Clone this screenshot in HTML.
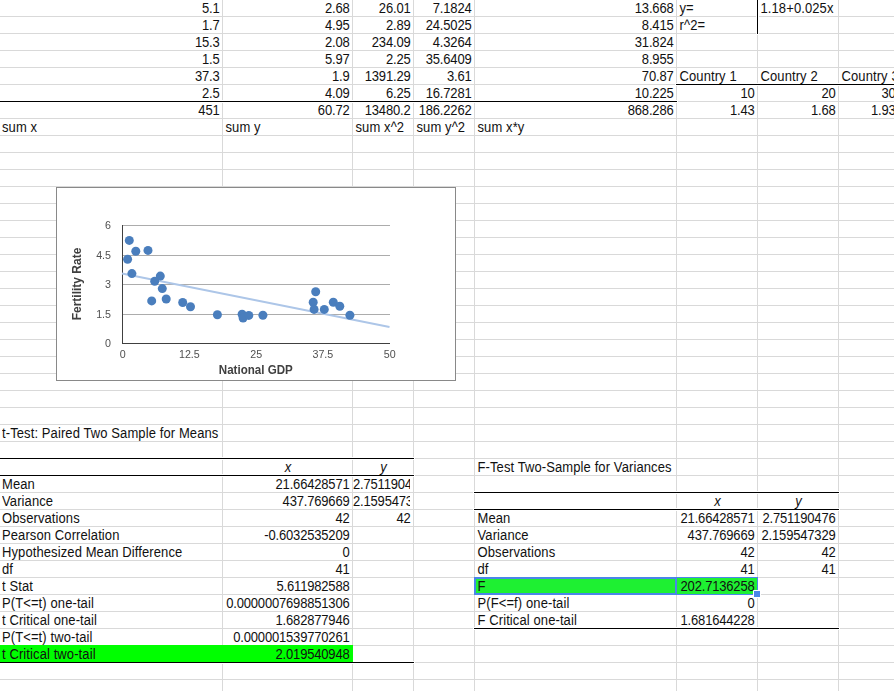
<!DOCTYPE html>
<html><head><meta charset="utf-8"><style>
html,body{margin:0;padding:0;background:#fff;}
body{width:894px;height:691px;overflow:hidden;position:relative;font-family:"Liberation Sans",sans-serif;}
.h{position:absolute;left:0;width:894px;height:1px;background:#d9d9d9;}
.v{position:absolute;top:0;width:1px;height:691px;background:#d9d9d9;}
.f{position:absolute;}
.t{position:absolute;height:17px;line-height:17px;font-size:13px;color:#111;white-space:nowrap;transform:scaleY(1.08);transform-origin:50% 12px;}
.r{text-align:right;}
.t{letter-spacing:0.1px;}
.n{letter-spacing:-0.18px;}
.c{text-align:center;}
.i{font-style:italic;}
.ch{position:absolute;left:0;top:0;will-change:transform;}
.ax{font-size:10.7px;fill:#505050;font-family:"Liberation Sans",sans-serif;}
.tt{font-size:12px;font-weight:bold;fill:#404040;font-family:"Liberation Sans",sans-serif;}
</style></head><body>
<div class="h" style="top:16px"></div>
<div class="h" style="top:33px"></div>
<div class="h" style="top:50px"></div>
<div class="h" style="top:67px"></div>
<div class="h" style="top:84px"></div>
<div class="h" style="top:101px"></div>
<div class="h" style="top:118px"></div>
<div class="h" style="top:135px"></div>
<div class="h" style="top:152px"></div>
<div class="h" style="top:169px"></div>
<div class="h" style="top:186px"></div>
<div class="h" style="top:203px"></div>
<div class="h" style="top:220px"></div>
<div class="h" style="top:237px"></div>
<div class="h" style="top:254px"></div>
<div class="h" style="top:271px"></div>
<div class="h" style="top:288px"></div>
<div class="h" style="top:305px"></div>
<div class="h" style="top:322px"></div>
<div class="h" style="top:339px"></div>
<div class="h" style="top:356px"></div>
<div class="h" style="top:373px"></div>
<div class="h" style="top:390px"></div>
<div class="h" style="top:407px"></div>
<div class="h" style="top:424px"></div>
<div class="h" style="top:441px"></div>
<div class="h" style="top:458px"></div>
<div class="h" style="top:475px"></div>
<div class="h" style="top:492px"></div>
<div class="h" style="top:509px"></div>
<div class="h" style="top:526px"></div>
<div class="h" style="top:543px"></div>
<div class="h" style="top:560px"></div>
<div class="h" style="top:577px"></div>
<div class="h" style="top:594px"></div>
<div class="h" style="top:611px"></div>
<div class="h" style="top:628px"></div>
<div class="h" style="top:645px"></div>
<div class="h" style="top:662px"></div>
<div class="h" style="top:679px"></div>
<div class="v" style="left:222px"></div>
<div class="v" style="left:352px"></div>
<div class="v" style="left:413px"></div>
<div class="v" style="left:474px"></div>
<div class="v" style="left:676px"></div>
<div class="v" style="left:757px"></div>
<div class="v" style="left:838px"></div>
<div class="f" style="left:0px;top:645px;width:353px;height:17px;background:#00ff00"></div>
<div class="f" style="left:474px;top:577px;width:284px;height:18px;background:#4a86e8"></div>
<div class="f" style="left:476px;top:579px;width:199px;height:14px;background:#1ef032"></div>
<div class="f" style="left:677px;top:578px;width:80px;height:16px;background:#1ef032"></div>
<div class="f" style="left:0px;top:101px;width:677px;height:1px;background:#000"></div>
<div class="f" style="left:676px;top:84px;width:219px;height:1px;background:#000"></div>
<div class="f" style="left:757px;top:0px;width:1px;height:34px;background:#000"></div>
<div class="f" style="left:0px;top:458px;width:414px;height:1px;background:#000"></div>
<div class="f" style="left:0px;top:475px;width:414px;height:1px;background:#000"></div>
<div class="f" style="left:0px;top:662px;width:414px;height:1px;background:#000"></div>
<div class="f" style="left:474px;top:492px;width:365px;height:1px;background:#000"></div>
<div class="f" style="left:474px;top:509px;width:365px;height:1px;background:#000"></div>
<div class="f" style="left:474px;top:628px;width:365px;height:1px;background:#000"></div>
<div class="f" style="left:222px;top:100px;width:1px;height:1px;background:#fff"></div>
<div class="f" style="left:222px;top:102px;width:1px;height:1px;background:#fff"></div>
<div class="f" style="left:222px;top:457px;width:1px;height:1px;background:#fff"></div>
<div class="f" style="left:222px;top:459px;width:1px;height:1px;background:#fff"></div>
<div class="f" style="left:222px;top:474px;width:1px;height:1px;background:#fff"></div>
<div class="f" style="left:222px;top:476px;width:1px;height:1px;background:#fff"></div>
<div class="f" style="left:222px;top:663px;width:1px;height:1px;background:#fff"></div>
<div class="f" style="left:352px;top:100px;width:1px;height:1px;background:#fff"></div>
<div class="f" style="left:352px;top:102px;width:1px;height:1px;background:#fff"></div>
<div class="f" style="left:352px;top:457px;width:1px;height:1px;background:#fff"></div>
<div class="f" style="left:352px;top:459px;width:1px;height:1px;background:#fff"></div>
<div class="f" style="left:352px;top:474px;width:1px;height:1px;background:#fff"></div>
<div class="f" style="left:352px;top:476px;width:1px;height:1px;background:#fff"></div>
<div class="f" style="left:352px;top:663px;width:1px;height:1px;background:#fff"></div>
<div class="f" style="left:413px;top:100px;width:1px;height:1px;background:#fff"></div>
<div class="f" style="left:413px;top:102px;width:1px;height:1px;background:#fff"></div>
<div class="f" style="left:413px;top:457px;width:1px;height:1px;background:#fff"></div>
<div class="f" style="left:413px;top:459px;width:1px;height:1px;background:#fff"></div>
<div class="f" style="left:413px;top:474px;width:1px;height:1px;background:#fff"></div>
<div class="f" style="left:413px;top:476px;width:1px;height:1px;background:#fff"></div>
<div class="f" style="left:413px;top:661px;width:1px;height:1px;background:#fff"></div>
<div class="f" style="left:413px;top:663px;width:1px;height:1px;background:#fff"></div>
<div class="f" style="left:414px;top:458px;width:1px;height:1px;background:#fff"></div>
<div class="f" style="left:414px;top:475px;width:1px;height:1px;background:#fff"></div>
<div class="f" style="left:414px;top:662px;width:1px;height:1px;background:#fff"></div>
<div class="f" style="left:473px;top:492px;width:1px;height:1px;background:#fff"></div>
<div class="f" style="left:473px;top:509px;width:1px;height:1px;background:#fff"></div>
<div class="f" style="left:473px;top:628px;width:1px;height:1px;background:#fff"></div>
<div class="f" style="left:474px;top:100px;width:1px;height:1px;background:#fff"></div>
<div class="f" style="left:474px;top:102px;width:1px;height:1px;background:#fff"></div>
<div class="f" style="left:474px;top:491px;width:1px;height:1px;background:#fff"></div>
<div class="f" style="left:474px;top:493px;width:1px;height:1px;background:#fff"></div>
<div class="f" style="left:474px;top:508px;width:1px;height:1px;background:#fff"></div>
<div class="f" style="left:474px;top:510px;width:1px;height:1px;background:#fff"></div>
<div class="f" style="left:474px;top:627px;width:1px;height:1px;background:#fff"></div>
<div class="f" style="left:474px;top:629px;width:1px;height:1px;background:#fff"></div>
<div class="f" style="left:675px;top:84px;width:1px;height:1px;background:#fff"></div>
<div class="f" style="left:676px;top:83px;width:1px;height:1px;background:#fff"></div>
<div class="f" style="left:676px;top:85px;width:1px;height:1px;background:#fff"></div>
<div class="f" style="left:676px;top:100px;width:1px;height:1px;background:#fff"></div>
<div class="f" style="left:676px;top:102px;width:1px;height:1px;background:#fff"></div>
<div class="f" style="left:676px;top:491px;width:1px;height:1px;background:#fff"></div>
<div class="f" style="left:676px;top:493px;width:1px;height:1px;background:#fff"></div>
<div class="f" style="left:676px;top:508px;width:1px;height:1px;background:#fff"></div>
<div class="f" style="left:676px;top:510px;width:1px;height:1px;background:#fff"></div>
<div class="f" style="left:676px;top:627px;width:1px;height:1px;background:#fff"></div>
<div class="f" style="left:676px;top:629px;width:1px;height:1px;background:#fff"></div>
<div class="f" style="left:677px;top:101px;width:1px;height:1px;background:#fff"></div>
<div class="f" style="left:756px;top:16px;width:1px;height:1px;background:#fff"></div>
<div class="f" style="left:756px;top:33px;width:1px;height:1px;background:#fff"></div>
<div class="f" style="left:757px;top:34px;width:1px;height:1px;background:#fff"></div>
<div class="f" style="left:757px;top:83px;width:1px;height:1px;background:#fff"></div>
<div class="f" style="left:757px;top:85px;width:1px;height:1px;background:#fff"></div>
<div class="f" style="left:757px;top:491px;width:1px;height:1px;background:#fff"></div>
<div class="f" style="left:757px;top:493px;width:1px;height:1px;background:#fff"></div>
<div class="f" style="left:757px;top:508px;width:1px;height:1px;background:#fff"></div>
<div class="f" style="left:757px;top:510px;width:1px;height:1px;background:#fff"></div>
<div class="f" style="left:757px;top:627px;width:1px;height:1px;background:#fff"></div>
<div class="f" style="left:757px;top:629px;width:1px;height:1px;background:#fff"></div>
<div class="f" style="left:758px;top:16px;width:1px;height:1px;background:#fff"></div>
<div class="f" style="left:758px;top:33px;width:1px;height:1px;background:#fff"></div>
<div class="f" style="left:838px;top:83px;width:1px;height:1px;background:#fff"></div>
<div class="f" style="left:838px;top:85px;width:1px;height:1px;background:#fff"></div>
<div class="f" style="left:838px;top:491px;width:1px;height:1px;background:#fff"></div>
<div class="f" style="left:838px;top:493px;width:1px;height:1px;background:#fff"></div>
<div class="f" style="left:838px;top:508px;width:1px;height:1px;background:#fff"></div>
<div class="f" style="left:838px;top:510px;width:1px;height:1px;background:#fff"></div>
<div class="f" style="left:838px;top:627px;width:1px;height:1px;background:#fff"></div>
<div class="f" style="left:838px;top:629px;width:1px;height:1px;background:#fff"></div>
<div class="f" style="left:839px;top:492px;width:1px;height:1px;background:#fff"></div>
<div class="f" style="left:839px;top:509px;width:1px;height:1px;background:#fff"></div>
<div class="f" style="left:839px;top:628px;width:1px;height:1px;background:#fff"></div>
<div class="f" style="left:753px;top:590px;width:8px;height:8px;background:#fff"></div>
<div class="f" style="left:754px;top:591px;width:6px;height:6px;background:#4a86e8"></div>
<div class="t n r" style="left:0px;width:219.5px;top:0px">5.1</div>
<div class="t n r" style="left:222px;width:127.5px;top:0px">2.68</div>
<div class="t n r" style="left:352px;width:58.5px;top:0px">26.01</div>
<div class="t n r" style="left:413px;width:58.5px;top:0px">7.1824</div>
<div class="t n r" style="left:474px;width:199.5px;top:0px">13.668</div>
<div class="t n r" style="left:0px;width:219.5px;top:17px">1.7</div>
<div class="t n r" style="left:222px;width:127.5px;top:17px">4.95</div>
<div class="t n r" style="left:352px;width:58.5px;top:17px">2.89</div>
<div class="t n r" style="left:413px;width:58.5px;top:17px">24.5025</div>
<div class="t n r" style="left:474px;width:199.5px;top:17px">8.415</div>
<div class="t n r" style="left:0px;width:219.5px;top:34px">15.3</div>
<div class="t n r" style="left:222px;width:127.5px;top:34px">2.08</div>
<div class="t n r" style="left:352px;width:58.5px;top:34px">234.09</div>
<div class="t n r" style="left:413px;width:58.5px;top:34px">4.3264</div>
<div class="t n r" style="left:474px;width:199.5px;top:34px">31.824</div>
<div class="t n r" style="left:0px;width:219.5px;top:51px">1.5</div>
<div class="t n r" style="left:222px;width:127.5px;top:51px">5.97</div>
<div class="t n r" style="left:352px;width:58.5px;top:51px">2.25</div>
<div class="t n r" style="left:413px;width:58.5px;top:51px">35.6409</div>
<div class="t n r" style="left:474px;width:199.5px;top:51px">8.955</div>
<div class="t n r" style="left:0px;width:219.5px;top:68px">37.3</div>
<div class="t n r" style="left:222px;width:127.5px;top:68px">1.9</div>
<div class="t n r" style="left:352px;width:58.5px;top:68px">1391.29</div>
<div class="t n r" style="left:413px;width:58.5px;top:68px">3.61</div>
<div class="t n r" style="left:474px;width:199.5px;top:68px">70.87</div>
<div class="t n r" style="left:0px;width:219.5px;top:85px">2.5</div>
<div class="t n r" style="left:222px;width:127.5px;top:85px">4.09</div>
<div class="t n r" style="left:352px;width:58.5px;top:85px">6.25</div>
<div class="t n r" style="left:413px;width:58.5px;top:85px">16.7281</div>
<div class="t n r" style="left:474px;width:199.5px;top:85px">10.225</div>
<div class="t n r" style="left:0px;width:219.5px;top:102px">451</div>
<div class="t n r" style="left:222px;width:127.5px;top:102px">60.72</div>
<div class="t n r" style="left:352px;width:58.5px;top:102px">13480.2</div>
<div class="t n r" style="left:413px;width:58.5px;top:102px">186.2262</div>
<div class="t n r" style="left:474px;width:199.5px;top:102px">868.286</div>
<div class="t" style="left:679.5px;top:0px">y=</div>
<div class="t" style="left:760.5px;top:0px">1.18+0.025x</div>
<div class="t" style="left:679.5px;top:17px">r^2=</div>
<div class="t" style="left:679.5px;top:68px">Country 1</div>
<div class="t" style="left:760.5px;top:68px">Country 2</div>
<div class="t" style="left:841.5px;top:68px">Country 3</div>
<div class="t n r" style="left:676px;width:78.5px;top:85px">10</div>
<div class="t n r" style="left:757px;width:78.5px;top:85px">20</div>
<div class="t n r" style="left:838px;width:57.5px;top:85px">30</div>
<div class="t n r" style="left:676px;width:78.5px;top:102px">1.43</div>
<div class="t n r" style="left:757px;width:78.5px;top:102px">1.68</div>
<div class="t n r" style="left:838px;width:57.5px;top:102px">1.93</div>
<div class="t" style="left:2px;top:119px">sum x</div>
<div class="t" style="left:225.5px;top:119px">sum y</div>
<div class="t" style="left:355.5px;top:119px">sum x^2</div>
<div class="t" style="left:416.5px;top:119px">sum y^2</div>
<div class="t" style="left:477.5px;top:119px">sum x*y</div>
<div class="t" style="left:2px;top:425px">t-Test: Paired Two Sample for Means</div>
<div class="t i c" style="left:223px;width:130px;top:459px">x</div>
<div class="t i c" style="left:353px;width:61px;top:459px">y</div>
<div class="t" style="left:2px;top:476px">Mean</div>
<div class="t n r" style="left:222px;width:127.5px;top:476px">21.66428571</div>
<div class="t" style="left:2px;top:493px">Variance</div>
<div class="t n r" style="left:222px;width:127.5px;top:493px">437.769669</div>
<div class="t" style="left:2px;top:510px">Observations</div>
<div class="t n r" style="left:222px;width:127.5px;top:510px">42</div>
<div class="t" style="left:2px;top:527px">Pearson Correlation</div>
<div class="t n r" style="left:222px;width:127.5px;top:527px">-0.6032535209</div>
<div class="t" style="left:2px;top:544px">Hypothesized Mean Difference</div>
<div class="t n r" style="left:222px;width:127.5px;top:544px">0</div>
<div class="t" style="left:2px;top:561px">df</div>
<div class="t n r" style="left:222px;width:127.5px;top:561px">41</div>
<div class="t" style="left:2px;top:578px">t Stat</div>
<div class="t n r" style="left:222px;width:127.5px;top:578px">5.611982588</div>
<div class="t" style="left:2px;top:595px">P(T&lt;=t) one-tail</div>
<div class="t n r" style="left:222px;width:127.5px;top:595px">0.0000007698851306</div>
<div class="t" style="left:2px;top:612px">t Critical one-tail</div>
<div class="t n r" style="left:222px;width:127.5px;top:612px">1.682877946</div>
<div class="t" style="left:2px;top:629px">P(T&lt;=t) two-tail</div>
<div class="t n r" style="left:222px;width:127.5px;top:629px">0.000001539770261</div>
<div class="t" style="left:2px;top:646px">t Critical two-tail</div>
<div class="t n r" style="left:222px;width:127.5px;top:646px">2.019540948</div>
<div class="t n" style="left:353px;width:57px;top:476px;overflow:hidden">2.751190476</div>
<div class="t n" style="left:353px;width:57px;top:493px;overflow:hidden">2.159547329</div>
<div class="t n r" style="left:352px;width:58.5px;top:510px">42</div>
<div class="t" style="left:477.5px;top:459px">F-Test Two-Sample for Variances</div>
<div class="t i c" style="left:677px;width:81px;top:493px">x</div>
<div class="t i c" style="left:758px;width:81px;top:493px">y</div>
<div class="t" style="left:477.5px;top:510px">Mean</div>
<div class="t n r" style="left:676px;width:78.5px;top:510px">21.66428571</div>
<div class="t n r" style="left:757px;width:78.5px;top:510px">2.751190476</div>
<div class="t" style="left:477.5px;top:527px">Variance</div>
<div class="t n r" style="left:676px;width:78.5px;top:527px">437.769669</div>
<div class="t n r" style="left:757px;width:78.5px;top:527px">2.159547329</div>
<div class="t" style="left:477.5px;top:544px">Observations</div>
<div class="t n r" style="left:676px;width:78.5px;top:544px">42</div>
<div class="t n r" style="left:757px;width:78.5px;top:544px">42</div>
<div class="t" style="left:477.5px;top:561px">df</div>
<div class="t n r" style="left:676px;width:78.5px;top:561px">41</div>
<div class="t n r" style="left:757px;width:78.5px;top:561px">41</div>
<div class="t" style="left:477.5px;top:578px">F</div>
<div class="t n r" style="left:676px;width:78.5px;top:578px">202.7136258</div>
<div class="t" style="left:477.5px;top:595px">P(F&lt;=f) one-tail</div>
<div class="t n r" style="left:676px;width:78.5px;top:595px">0</div>
<div class="t" style="left:477.5px;top:612px">F Critical one-tail</div>
<div class="t n r" style="left:676px;width:78.5px;top:612px">1.681644228</div>
<svg class="ch" width="894" height="691" viewBox="0 0 894 691"><rect x="56.5" y="187.5" width="399" height="193" fill="#fff" stroke="#898989" stroke-width="1"/><line x1="122" y1="225.5" x2="390" y2="225.5" stroke="#acacac" stroke-width="1"/><line x1="122" y1="255.5" x2="390" y2="255.5" stroke="#acacac" stroke-width="1"/><line x1="122" y1="284.5" x2="390" y2="284.5" stroke="#acacac" stroke-width="1"/><line x1="122" y1="314.5" x2="390" y2="314.5" stroke="#acacac" stroke-width="1"/><line x1="122.5" y1="225" x2="122.5" y2="344" stroke="#404040" stroke-width="1"/><line x1="122" y1="343.5" x2="390" y2="343.5" stroke="#404040" stroke-width="1"/><line x1="122" y1="273.6" x2="389.5" y2="327" stroke="#adc6e8" stroke-width="2"/><circle cx="129.3" cy="240.4" r="4.5" fill="#4a7ebd"/><circle cx="135.8" cy="251.3" r="4.5" fill="#4a7ebd"/><circle cx="148.0" cy="250.4" r="4.5" fill="#4a7ebd"/><circle cx="127.6" cy="259.3" r="4.5" fill="#4a7ebd"/><circle cx="131.9" cy="273.6" r="4.5" fill="#4a7ebd"/><circle cx="160.3" cy="276.1" r="4.5" fill="#4a7ebd"/><circle cx="154.7" cy="281.3" r="4.5" fill="#4a7ebd"/><circle cx="162.3" cy="288.6" r="4.5" fill="#4a7ebd"/><circle cx="151.7" cy="300.9" r="4.5" fill="#4a7ebd"/><circle cx="166.2" cy="299.0" r="4.5" fill="#4a7ebd"/><circle cx="182.7" cy="302.5" r="4.5" fill="#4a7ebd"/><circle cx="190.5" cy="306.8" r="4.5" fill="#4a7ebd"/><circle cx="217.4" cy="314.7" r="4.5" fill="#4a7ebd"/><circle cx="242.1" cy="314.2" r="4.5" fill="#4a7ebd"/><circle cx="243.1" cy="318.1" r="4.5" fill="#4a7ebd"/><circle cx="248.8" cy="315.4" r="4.5" fill="#4a7ebd"/><circle cx="262.9" cy="315.2" r="4.5" fill="#4a7ebd"/><circle cx="315.7" cy="291.7" r="4.5" fill="#4a7ebd"/><circle cx="313.2" cy="302.2" r="4.5" fill="#4a7ebd"/><circle cx="314.1" cy="309.4" r="4.5" fill="#4a7ebd"/><circle cx="324.3" cy="309.4" r="4.5" fill="#4a7ebd"/><circle cx="333.3" cy="302.3" r="4.5" fill="#4a7ebd"/><circle cx="339.8" cy="306.2" r="4.5" fill="#4a7ebd"/><circle cx="349.9" cy="315.2" r="4.5" fill="#4a7ebd"/><text x="111" y="228.5" text-anchor="end" class="ax">6</text><text x="111" y="258.5" text-anchor="end" class="ax">4.5</text><text x="111" y="287.5" text-anchor="end" class="ax">3</text><text x="111" y="317.5" text-anchor="end" class="ax">1.5</text><text x="111" y="346.5" text-anchor="end" class="ax">0</text><text x="122.7" y="358" text-anchor="middle" class="ax">0</text><text x="189.4" y="358" text-anchor="middle" class="ax">12.5</text><text x="256.2" y="358" text-anchor="middle" class="ax">25</text><text x="322.9" y="358" text-anchor="middle" class="ax">37.5</text><text x="389.7" y="358" text-anchor="middle" class="ax">50</text><text x="255.8" y="374" text-anchor="middle" class="tt" textLength="74" lengthAdjust="spacingAndGlyphs">National GDP</text><text transform="translate(81,284) rotate(-90)" text-anchor="middle" class="tt">Fertility Rate</text></svg>
</body></html>
